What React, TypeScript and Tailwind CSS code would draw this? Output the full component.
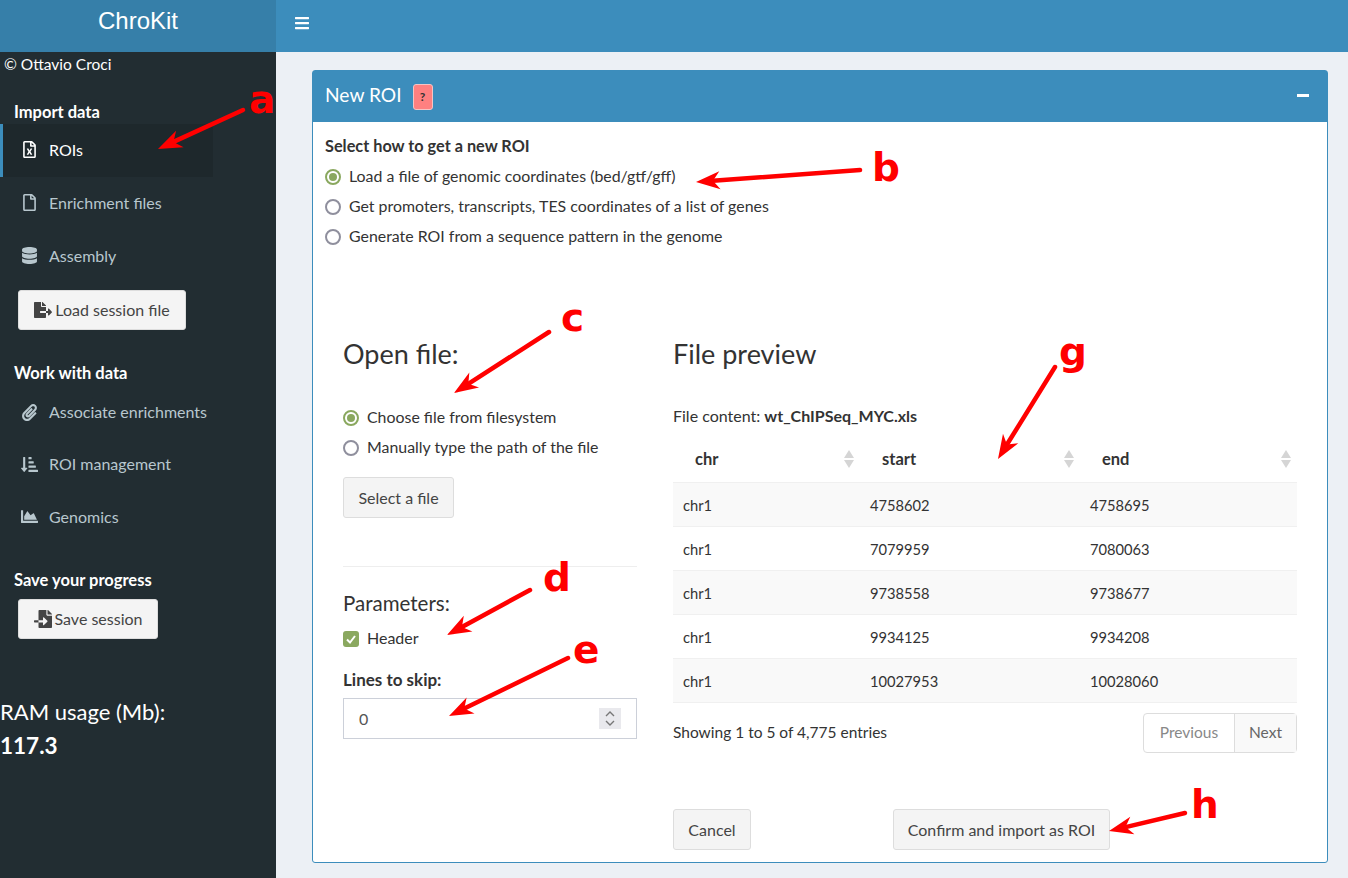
import { FaBars, FaChartArea, FaDatabase, FaFileExport, FaFileImport, FaPaperclip, FaRegFile, FaRegFileExcel, FaSortAmountDownAlt } from "react-icons/fa";

const rows = [
  ["chr1", "4758602", "4758695"],
  ["chr1", "7079959", "7080063"],
  ["chr1", "9738558", "9738677"],
  ["chr1", "9934125", "9934208"],
  ["chr1", "10027953", "10028060"],
];

// annotation arrows: [tail x, tail y, tip x, tip y]
const arrows = [
  [243, 110, 158, 149],
  [860, 170, 696, 182],
  [549, 332, 454, 393],
  [530, 590, 447, 635],
  [568, 658, 449, 716],
  [1055, 367, 998, 459],
  [1185, 813, 1109, 831],
];

const letters = [
  { t: "a", cls: "left-[249px] top-[75px]" },
  { t: "b", cls: "left-[872px] top-[143px]" },
  { t: "c", cls: "left-[561px] top-[293px]" },
  { t: "d", cls: "left-[543px] top-[553px]" },
  { t: "e", cls: "left-[573px] top-[625px]" },
  { t: "g", cls: "left-[1059px] top-[327px]" },
  { t: "h", cls: "left-[1191px] top-[780px]" },
];

function Arrow({ a }: { a: number[] }) {
  const [x1, y1, x2, y2] = a;
  const len = Math.hypot(x2 - x1, y2 - y1);
  const ux = (x2 - x1) / len;
  const uy = (y2 - y1) / len;
  const bx = x2 - ux * 24;
  const by = y2 - uy * 24;
  const nx = x2 - ux * 17;
  const ny = y2 - uy * 17;
  const pts = `${x2},${y2} ${bx - uy * 9},${by + ux * 9} ${nx},${ny} ${bx + uy * 9},${by - ux * 9}`;
  return (
    <g>
      <line x1={x1} y1={y1} x2={nx} y2={ny} stroke="#ff0000" strokeWidth="4.5" strokeLinecap="round" />
      <polygon points={pts} fill="#ff0000" />
    </g>
  );
}

function NavItem({ icon, label, active, h = "h-[53px]" }: any) {
  return (
    <div className={`flex items-center w-[213px] ${h} border-l-[3px] ${active ? "bg-[#1e282c] border-[#3c8dbc] text-white" : "border-transparent text-[#b8c7ce]"}`}>
      <span className="w-[46px] pl-[18px] text-[17px] -translate-y-px">{icon}</span>
      <span className="-translate-y-px">{label}</span>
    </div>
  );
}

function Radio({ on, label }: { on?: boolean; label: string }) {
  return (
    <div className="flex items-center h-[30px] text-[15.9px]">
      <span className={`w-4 h-4 rounded-full border-2 flex items-center justify-center mr-2 ${on ? "border-[#8aa85f]" : "border-[#8f8f9d]"}`}>
        {on && <span className="w-2 h-2 rounded-full bg-[#8aa85f]" />}
      </span>
      <span className="-translate-y-px">{label}</span>
    </div>
  );
}

function SortCaret() {
  return (
    <svg width="12" height="18" viewBox="0 0 12 18" className="absolute right-[5px] top-[14px]">
      <polygon points="6,0 11,8 1,8" fill="#d5d5d5" />
      <polygon points="6,18 11,10 1,10" fill="#d5d5d5" />
    </svg>
  );
}

function Btn({ children, cls }: any) {
  return (
    <div className={`flex items-center justify-center bg-[#f4f4f4] border border-[#dddddd] rounded-[3px] text-[#444444] ${cls}`}>
      {children}
    </div>
  );
}

export default function App() {
  return (
    <div className="relative h-[878px] overflow-hidden flex bg-[#ecf0f5] text-[#333333] text-[16px] font-['Lato','Noto_Sans',sans-serif]">
      <aside className="w-[276px] shrink-0 bg-[#222d32] text-white">
        <div className="h-[52px] bg-[#367fa9] flex items-center justify-center pb-[10px] text-[24px] font-['Liberation_Sans',sans-serif]">ChroKit</div>
        <div className="pl-1 h-[24px] leading-[24px] text-[15.5px]">© Ottavio Croci</div>
        <div className="pl-[14px] pt-[25px] h-[48px] leading-[22px] font-bold text-[16.5px]">Import data</div>
        <NavItem active icon={<FaRegFileExcel />} label="ROIs" />
        <NavItem icon={<FaRegFile />} label="Enrichment files" />
        <NavItem icon={<FaDatabase />} label="Assembly" />
        <Btn cls="ml-[18px] mt-[7px] w-[168px] h-[40px]">
          <FaFileExport className="text-[18px] mr-[3px]" />Load session file
        </Btn>
        <div className="pl-[14px] pt-[32px] leading-[22px] font-bold text-[16.5px] h-[57px]">Work with data</div>
        <NavItem h="h-[52px]" icon={<FaPaperclip />} label="Associate enrichments" />
        <NavItem h="h-[52px]" icon={<FaSortAmountDownAlt />} label="ROI management" />
        <NavItem h="h-[53px]" icon={<FaChartArea />} label="Genomics" />
        <div className="pl-[14px] pt-[25px] leading-[22px] font-bold text-[16.5px] h-[55px]">Save your progress</div>
        <Btn cls="ml-[18px] w-[140px] h-[40px]">
          <FaFileImport className="text-[18px] mr-[3px]" />Save session
        </Btn>
        <div className="mt-[55px] text-[22px] leading-[35px]">RAM usage (Mb):</div>
        <div className="text-[22.5px] leading-[34px] font-bold">117.3</div>
      </aside>

      <div className="flex-1">
        <header className="h-[52px] bg-[#3c8dbc] flex items-center pl-[18px] pb-[6px] text-white text-[15px]">
          <FaBars className="text-[16px]" />
        </header>
        <main className="pt-[18px] pl-[36px] pr-[20px]">
          <section className="h-[793px] bg-white border border-[#3c8dbc] rounded-[3px] flex flex-col">
            <div className="h-[51px] shrink-0 bg-[#3c8dbc] flex items-center pl-[12px] pr-[18px] pb-[3px] text-white">
              <span className="text-[19.2px]">New ROI</span>
              <span className="ml-[11px] w-5 h-[26px] mt-[3px] bg-[#ff8080] border border-[#f4c4c4] rounded-[3px] text-[#333333] text-[12px] font-bold flex items-center justify-center">?</span>
              <span className="ml-auto w-[12px] h-[3px] bg-white" />
            </div>
            <div className="flex-1 pl-[12px] pr-[30px] pt-[12px] relative">
              <div className="font-bold text-[16.3px] h-[24px] leading-[24px] mb-[4px]">Select how to get a new ROI</div>
              <Radio on label="Load a file of genomic coordinates (bed/gtf/gff)" />
              <Radio label="Get promoters, transcripts, TES coordinates of a list of genes" />
              <Radio label="Generate ROI from a sequence pattern in the genome" />

              <div className="flex pl-[18px] pt-[84px]">
                <div className="w-[294px] shrink-0">
                  <h2 className="text-[27px] leading-[36px] h-[47px]">Open file:</h2>
                  <div className="h-[20px]" />
                  <Radio on label="Choose file from filesystem" />
                  <Radio label="Manually type the path of the file" />
                  <Btn cls="mt-[14px] w-[111px] h-[41px]">Select a file</Btn>
                  <div className="mt-[48px] border-t border-[#eeeeee]" />
                  <div className="mt-[23px] text-[20.5px] leading-[26px]">Parameters:</div>
                  <div className="flex items-center h-[30px] mt-[8px]">
                    <span className="w-4 h-4 rounded-[3px] bg-[#8aa85f] flex items-center justify-center mr-2">
                      <svg width="12" height="12" viewBox="0 0 12 12"><path d="M2 6.5 L5 9.5 L10 3" fill="none" stroke="white" strokeWidth="2" /></svg>
                    </span>
                    <span className="-translate-y-px">Header</span>
                  </div>
                  <div className="mt-[14px] font-bold text-[17px] h-[24px] leading-[24px]">Lines to skip:</div>
                  <div className="mt-[6px] h-[41px] border border-[#ccd0d9] flex items-center justify-between pl-[15px] pr-[15px] text-[#555555]">
                    <span>0</span>
                    <span className="w-[22px] h-[21px] bg-[#e9e9ed] flex items-center justify-center">
                      <svg width="12" height="17" viewBox="0 0 12 17" fill="none" stroke="#777777" strokeWidth="1.4"><path d="M2 6 L6 2 L10 6" /><path d="M2 11 L6 15 L10 11" /></svg>
                    </span>
                  </div>
                </div>

                <div className="ml-[36px] flex-1">
                  <h2 className="text-[27px] leading-[36px] h-[47px]">File preview</h2>
                  <div className="mt-[21px] h-[24px] leading-[24px]">File content: <b>wt_ChIPSeq_MYC.xls</b></div>
                  <table className="mt-[8px] w-full table-fixed border-collapse">
                    <thead>
                      <tr className="h-[46px] border-b border-[#f0f0f0] font-bold text-left text-[16.5px]">
                        <th className="relative w-[187px] pl-[22px] pt-[2px]">chr<SortCaret /></th>
                        <th className="relative w-[220px] pl-[22px] pt-[2px]">start<SortCaret /></th>
                        <th className="relative pl-[22px] pt-[2px]">end<SortCaret /></th>
                      </tr>
                    </thead>
                    <tbody>
                      {rows.map((r, i) => (
                        <tr key={i} className={`h-[44px] border-b border-[#f0f0f0] text-[14.7px] ${i % 2 === 0 ? "bg-[#f9f9f9]" : "bg-white"}`}>
                          {r.map((c, j) => (
                            <td key={j} className="pl-[10px] pt-[2px]">{c}</td>
                          ))}
                        </tr>
                      ))}
                    </tbody>
                  </table>
                  <div className="flex items-center justify-between mt-[10px] h-[40px] text-[15.5px]">
                    <span>Showing 1 to 5 of 4,775 entries</span>
                    <div className="flex h-[40px] border border-[#dddddd] rounded-[4px]">
                      <span className="w-[91px] flex items-center justify-center border-r border-[#dddddd] text-[#888888]">Previous</span>
                      <span className="w-[61px] flex items-center justify-center bg-[#f9f9f9] text-[#666666]">Next</span>
                    </div>
                  </div>
                  <div className="flex mt-[56px]">
                    <Btn cls="w-[78px] h-[41px] pt-px">Cancel</Btn>
                    <Btn cls="ml-[142px] w-[217px] h-[41px] pt-px">Confirm and import as ROI</Btn>
                  </div>
                </div>
              </div>
            </div>
          </section>
        </main>
      </div>

      {/* red annotations on top of the screenshot */}
      <svg width="1348" height="878" className="absolute inset-0 pointer-events-none">
        {arrows.map((a, i) => (
          <Arrow key={i} a={a} />
        ))}
      </svg>
      {letters.map((l) => (
        <span key={l.t} className={`absolute ${l.cls} text-[#ff0000] text-[39px] leading-[50px] font-bold font-['DejaVu_Sans',sans-serif]`}>{l.t}</span>
      ))}
    </div>
  );
}
